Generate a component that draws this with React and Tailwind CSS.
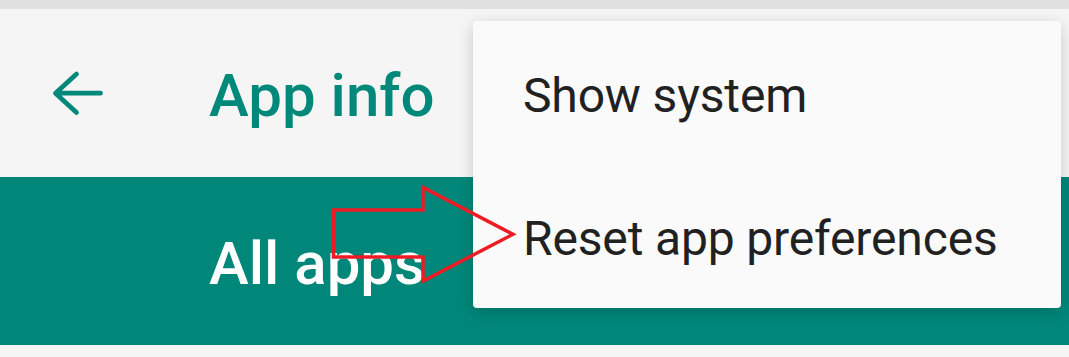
import React from 'react';

const MenuItem = ({ label }) => (
  <div className="text-[48px] leading-[48px] font-normal tracking-[-0.15px] text-[#212121] whitespace-nowrap">{label}</div>
);

export default function App() {
  return (
    <div
      className="relative w-[1069px] h-[357px] overflow-hidden bg-[#f5f5f5]"
      style={{ fontFamily: "Roboto, 'Noto Sans', sans-serif" }}
    >
      {/* Status strip */}
      <div className="h-[9px] bg-[#e0e0e0]" />

      {/* Toolbar */}
      <div className="h-[168px] bg-[#f5f5f5] flex items-center pt-[5px]">
        <svg className="ml-[48px] shrink-0" width="60" height="60" viewBox="0 0 60 60">
          <path
            d="M52.5 27.2 H8 M28.5 8 L7.5 27.2 L28.5 46.5"
            fill="none"
            stroke="#00897b"
            strokeWidth="4.8"
            strokeLinecap="round"
            strokeLinejoin="round"
          />
        </svg>
        <h1 className="ml-[101px] text-[60px] leading-[60px] font-medium text-[#00897b] whitespace-nowrap">App info</h1>
      </div>

      {/* Tab band */}
      <div className="h-[168px] bg-[#00877a] flex items-center pt-[5px] pl-[209px]">
        <span className="text-[60px] leading-[60px] font-medium text-white whitespace-nowrap">All apps</span>
      </div>

      {/* Overflow menu */}
      <div className="absolute left-[473px] top-[21px] w-[588px] h-[287px] rounded-[4px] bg-[#fafafa] shadow-[0_4px_16px_rgba(0,0,0,0.18)] flex flex-col gap-[95px] pt-[51px] pl-[50px]">
        <MenuItem label="Show system" />
        <MenuItem label="Reset app preferences" />
      </div>

      {/* Annotation arrow */}
      <svg className="absolute inset-0 pointer-events-none" width="1069" height="357" viewBox="0 0 1069 357">
        <polygon
          points="333.5,210 423,210 423,187.5 513,234.3 423,281 423,257 333.5,257"
          fill="none"
          stroke="#ed1c24"
          strokeWidth="3.5"
        />
      </svg>
    </div>
  );
}
